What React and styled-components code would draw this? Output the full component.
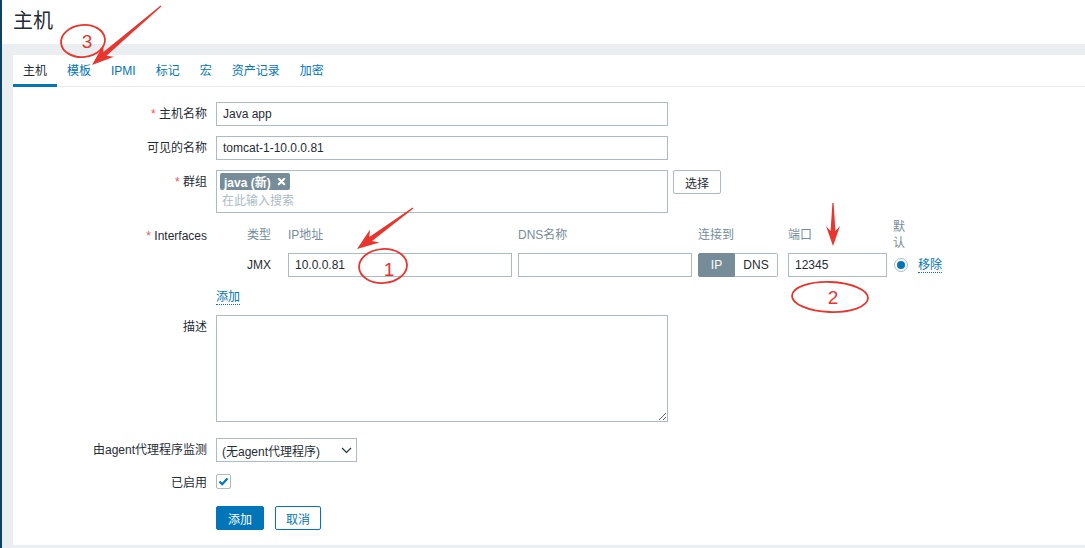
import React from 'react';
import styled, { createGlobalStyle } from 'styled-components';

const GlobalStyle = createGlobalStyle`
  html, body { margin: 0; padding: 0; }
  body {
    background: #ebeef0;
    font-family: "Liberation Sans", "Noto Sans CJK SC", sans-serif;
    font-size: 12px;
    color: #1f2c33;
    overflow: hidden;
  }
  * { box-sizing: border-box; }
`;

const Page = styled.div`
  position: relative;
  width: 1085px;
  height: 548px;
  border-left: 2px solid #0e4166;
  overflow: hidden;
`;

const Header = styled.header`
  height: 44px;
  background: #fff;
  padding-left: 11px;
  h1 {
    margin: 0;
    font-size: 20px;
    font-weight: normal;
    line-height: 42px;
  }
`;

const Main = styled.main`
  padding: 11px 0 0 11px;
`;

const Panel = styled.section`
  background: #fff;
  height: 490px;
`;

const TabBar = styled.nav`
  display: flex;
  height: 32px;
  border-bottom: 1px solid #ebeef0;
`;

const Tab = styled.a`
  padding: 2px 10px 0;
  height: 32px;
  line-height: 29px;
  color: ${p => (p.$active ? '#1f2c33' : '#0275b8')};
  border-bottom: 3px solid ${p => (p.$active ? '#0275b8' : 'transparent')};
`;

const Form = styled.div`
  display: flex;
  flex-direction: column;
  padding-top: 15px;
`;

const Row = styled.div`
  display: grid;
  grid-template-columns: 194px 1fr;
  column-gap: 9px;
  margin-top: ${p => p.$mt || 0}px;
`;

const Label = styled.label`
  text-align: right;
  line-height: 24px;
  padding-top: ${p => p.$pt || 0}px;
  white-space: nowrap;
  &::before {
    content: ${p => (p.$required ? '"* "' : '""')};
    color: #e45959;
  }
`;

const Field = styled.div`
  display: flex;
  align-items: flex-start;
`;

const TextInput = styled.input`
  width: ${p => p.$w || 452}px;
  height: 24px;
  border: 1px solid #acbbc2;
  padding: 0 6px;
  font: inherit;
  color: #1f2c33;
  background: #fff;
  outline: none;
`;

const MultiSelect = styled.div`
  width: 452px;
  height: 43px;
  border: 1px solid #acbbc2;
  padding: 2px 3px;
`;

const Tag = styled.span`
  display: inline-flex;
  align-items: center;
  gap: 6px;
  height: 17px;
  padding: 0 4px;
  background: #768d99;
  color: #fff;
  font-weight: bold;
  border-radius: 2px;
`;

const Placeholder = styled.div`
  color: #acbbc2;
  line-height: 22px;
  padding-left: 2px;
`;

const Button = styled.button`
  height: 24px;
  padding: 0 ${p => p.$px || 11}px;
  margin-left: ${p => p.$ml || 0}px;
  font: inherit;
  border-radius: 2px;
  border: 1px solid ${p => (p.$primary || p.$outline ? '#0275b8' : '#acbbc2')};
  background: ${p => (p.$primary ? '#0275b8' : '#fff')};
  color: ${p => (p.$primary ? '#fff' : p.$outline ? '#0275b8' : '#1f2c33')};
`;

const IfaceTable = styled.div`
  display: grid;
  grid-template-columns: 41px 230px 180px 90px 105px 25px auto;
  grid-template-rows: 32px 24px;
  row-gap: 2px;
  padding-left: 31px;
  align-items: center;
`;

const HeadCell = styled.div`
  color: #768d99;
  width: ${p => (p.$narrow ? '13px' : 'auto')};
  line-height: 16px;
`;

const Toggle = styled.div`
  display: flex;
  height: 24px;
  width: 80px;
`;

const ToggleOpt = styled.span`
  flex: ${p => (p.$on ? '0 0 37px' : '1')};
  display: flex;
  align-items: center;
  justify-content: center;
  border: 1px solid ${p => (p.$on ? '#768d99' : '#acbbc2')};
  background: ${p => (p.$on ? '#768d99' : '#fff')};
  color: ${p => (p.$on ? '#fff' : '#1f2c33')};
  border-radius: ${p => (p.$on ? '2px 0 0 2px' : '0 2px 2px 0')};
  border-left-width: ${p => (p.$on ? 1 : 0)}px;
`;

const Radio = styled.span`
  display: inline-flex;
  align-items: center;
  justify-content: center;
  width: 14px;
  height: 14px;
  margin-left: 1px;
  border: 1px solid #acbbc2;
  border-radius: 50%;
  &::after {
    content: "";
    width: 8px;
    height: 8px;
    border-radius: 50%;
    background: #0275b8;
  }
`;

const Link = styled.a`
  color: #0275b8;
  border-bottom: 1px dotted #0275b8;
  line-height: 14px;
  justify-self: start;
`;

const TextArea = styled.textarea`
  width: 452px;
  height: 107px;
  border: 1px solid #acbbc2;
  font: inherit;
  resize: both;
  outline: none;
`;

const Select = styled.div`
  width: 141px;
  height: 24px;
  border: 1px solid #acbbc2;
  display: flex;
  align-items: center;
  justify-content: space-between;
  padding: 0 4px 0 5px;
`;

const Checkbox = styled.span`
  width: 15px;
  height: 15px;
  margin-top: 3px;
  border: 1px solid #acbbc2;
  border-radius: 2px;
  display: flex;
  align-items: center;
  justify-content: center;
`;

const Overlay = styled.svg`
  position: absolute;
  left: -2px;
  top: 0;
  pointer-events: none;
`;

function arrowPoints([x1, y1], [x2, y2], head = 22, wing = 8) {
  const dx = x2 - x1, dy = y2 - y1, len = Math.hypot(dx, dy);
  const ux = dx / len, uy = dy / len, nx = -uy, ny = ux;
  const neck = head - 5;
  const bx = x2 - ux * head, by = y2 - uy * head;
  const sx = x2 - ux * neck, sy = y2 - uy * neck;
  const pts = [
    [x1 + nx * 0.6, y1 + ny * 0.6],
    [sx + nx * 2.4, sy + ny * 2.4],
    [bx + nx * wing, by + ny * wing],
    [x2, y2],
    [bx - nx * wing, by - ny * wing],
    [sx - nx * 2.4, sy - ny * 2.4],
    [x1 - nx * 0.6, y1 - ny * 0.6],
  ];
  return pts.map(p => p.map(v => v.toFixed(1)).join(',')).join(' ');
}

const RED = '#e8352e';

function Annotations() {
  return (
    <Overlay width="1085" height="548" viewBox="0 0 1085 548">
      <g fill={RED}>
        <polygon points={arrowPoints([161, 6], [92, 65])} />
        <polygon points={arrowPoints([413, 208], [357, 249])} />
        <polygon points={arrowPoints([833, 203], [833, 246], 20, 7)} />
      </g>
      <g fill="none" stroke={RED} strokeWidth="1.8">
        <ellipse cx="83" cy="41" rx="22" ry="16" transform="rotate(-6 83 41)" />
        <ellipse cx="383" cy="266" rx="24" ry="17" transform="rotate(-4 383 266)" />
        <ellipse cx="830" cy="297" rx="38" ry="15" transform="rotate(2 830 297)" />
      </g>
      <g fill={RED} fontFamily="Liberation Sans, sans-serif" fontSize="19" textAnchor="middle">
        <text x="87" y="48">3</text>
        <text x="389" y="276">1</text>
        <text x="833" y="304">2</text>
      </g>
    </Overlay>
  );
}

const tabs = ['主机', '模板', 'IPMI', '标记', '宏', '资产记录', '加密'];

export default function App() {
  return (
    <Page>
      <GlobalStyle />
      <Header>
        <h1>主机</h1>
      </Header>
      <Main>
        <Panel>
          <TabBar>
            {tabs.map((t, i) => (
              <Tab key={t} $active={i === 0}>{t}</Tab>
            ))}
          </TabBar>
          <Form>
            <Row>
              <Label $required>主机名称</Label>
              <Field><TextInput defaultValue="Java app" /></Field>
            </Row>
            <Row $mt={10}>
              <Label>可见的名称</Label>
              <Field><TextInput defaultValue="tomcat-1-10.0.0.81" /></Field>
            </Row>
            <Row $mt={10}>
              <Label $required>群组</Label>
              <Field>
                <MultiSelect>
                  <Tag>
                    java (新)
                    <svg width="9" height="9" viewBox="0 0 10 10">
                      <path d="M2 2 L8 8 M8 2 L2 8" stroke="#fff" strokeWidth="2.4" strokeLinecap="round" />
                    </svg>
                  </Tag>
                  <Placeholder>在此输入搜索</Placeholder>
                </MultiSelect>
                <Button $ml={5} $px={11}>选择</Button>
              </Field>
            </Row>
            <Row $mt={6}>
              <Label $required $pt={5}>Interfaces</Label>
              <IfaceTable>
                <HeadCell>类型</HeadCell>
                <HeadCell>IP地址</HeadCell>
                <HeadCell>DNS名称</HeadCell>
                <HeadCell>连接到</HeadCell>
                <HeadCell>端口</HeadCell>
                <HeadCell $narrow>默认</HeadCell>
                <span />
                <span>JMX</span>
                <TextInput $w={224} defaultValue="10.0.0.81" />
                <TextInput $w={174} defaultValue="" />
                <Toggle>
                  <ToggleOpt $on>IP</ToggleOpt>
                  <ToggleOpt>DNS</ToggleOpt>
                </Toggle>
                <TextInput $w={99} defaultValue="12345" />
                <Radio />
                <Link>移除</Link>
              </IfaceTable>
            </Row>
            <Row $mt={13}>
              <span />
              <Link>添加</Link>
            </Row>
            <Row $mt={10}>
              <Label>描述</Label>
              <Field><TextArea /></Field>
            </Row>
            <Row $mt={16}>
              <Label>由agent代理程序监测</Label>
              <Field>
                <Select>
                  <span>(无agent代理程序)</span>
                  <svg width="11" height="7" viewBox="0 0 11 7">
                    <path d="M1 1 L5.5 5.5 L10 1" fill="none" stroke="#1f2c33" strokeWidth="1.1" />
                  </svg>
                </Select>
              </Field>
            </Row>
            <Row $mt={9}>
              <Label>已启用</Label>
              <Field>
                <Checkbox>
                  <svg width="11" height="9" viewBox="0 0 11 9">
                    <path d="M1.5 4.5 L4.2 7.2 L9.5 1.5" fill="none" stroke="#0275b8" strokeWidth="2.2" />
                  </svg>
                </Checkbox>
              </Field>
            </Row>
            <Row $mt={11}>
              <span />
              <Field>
                <Button $primary $px={11}>添加</Button>
                <Button $outline $ml={11} $px={10}>取消</Button>
              </Field>
            </Row>
          </Form>
        </Panel>
      </Main>
      <Annotations />
    </Page>
  );
}
